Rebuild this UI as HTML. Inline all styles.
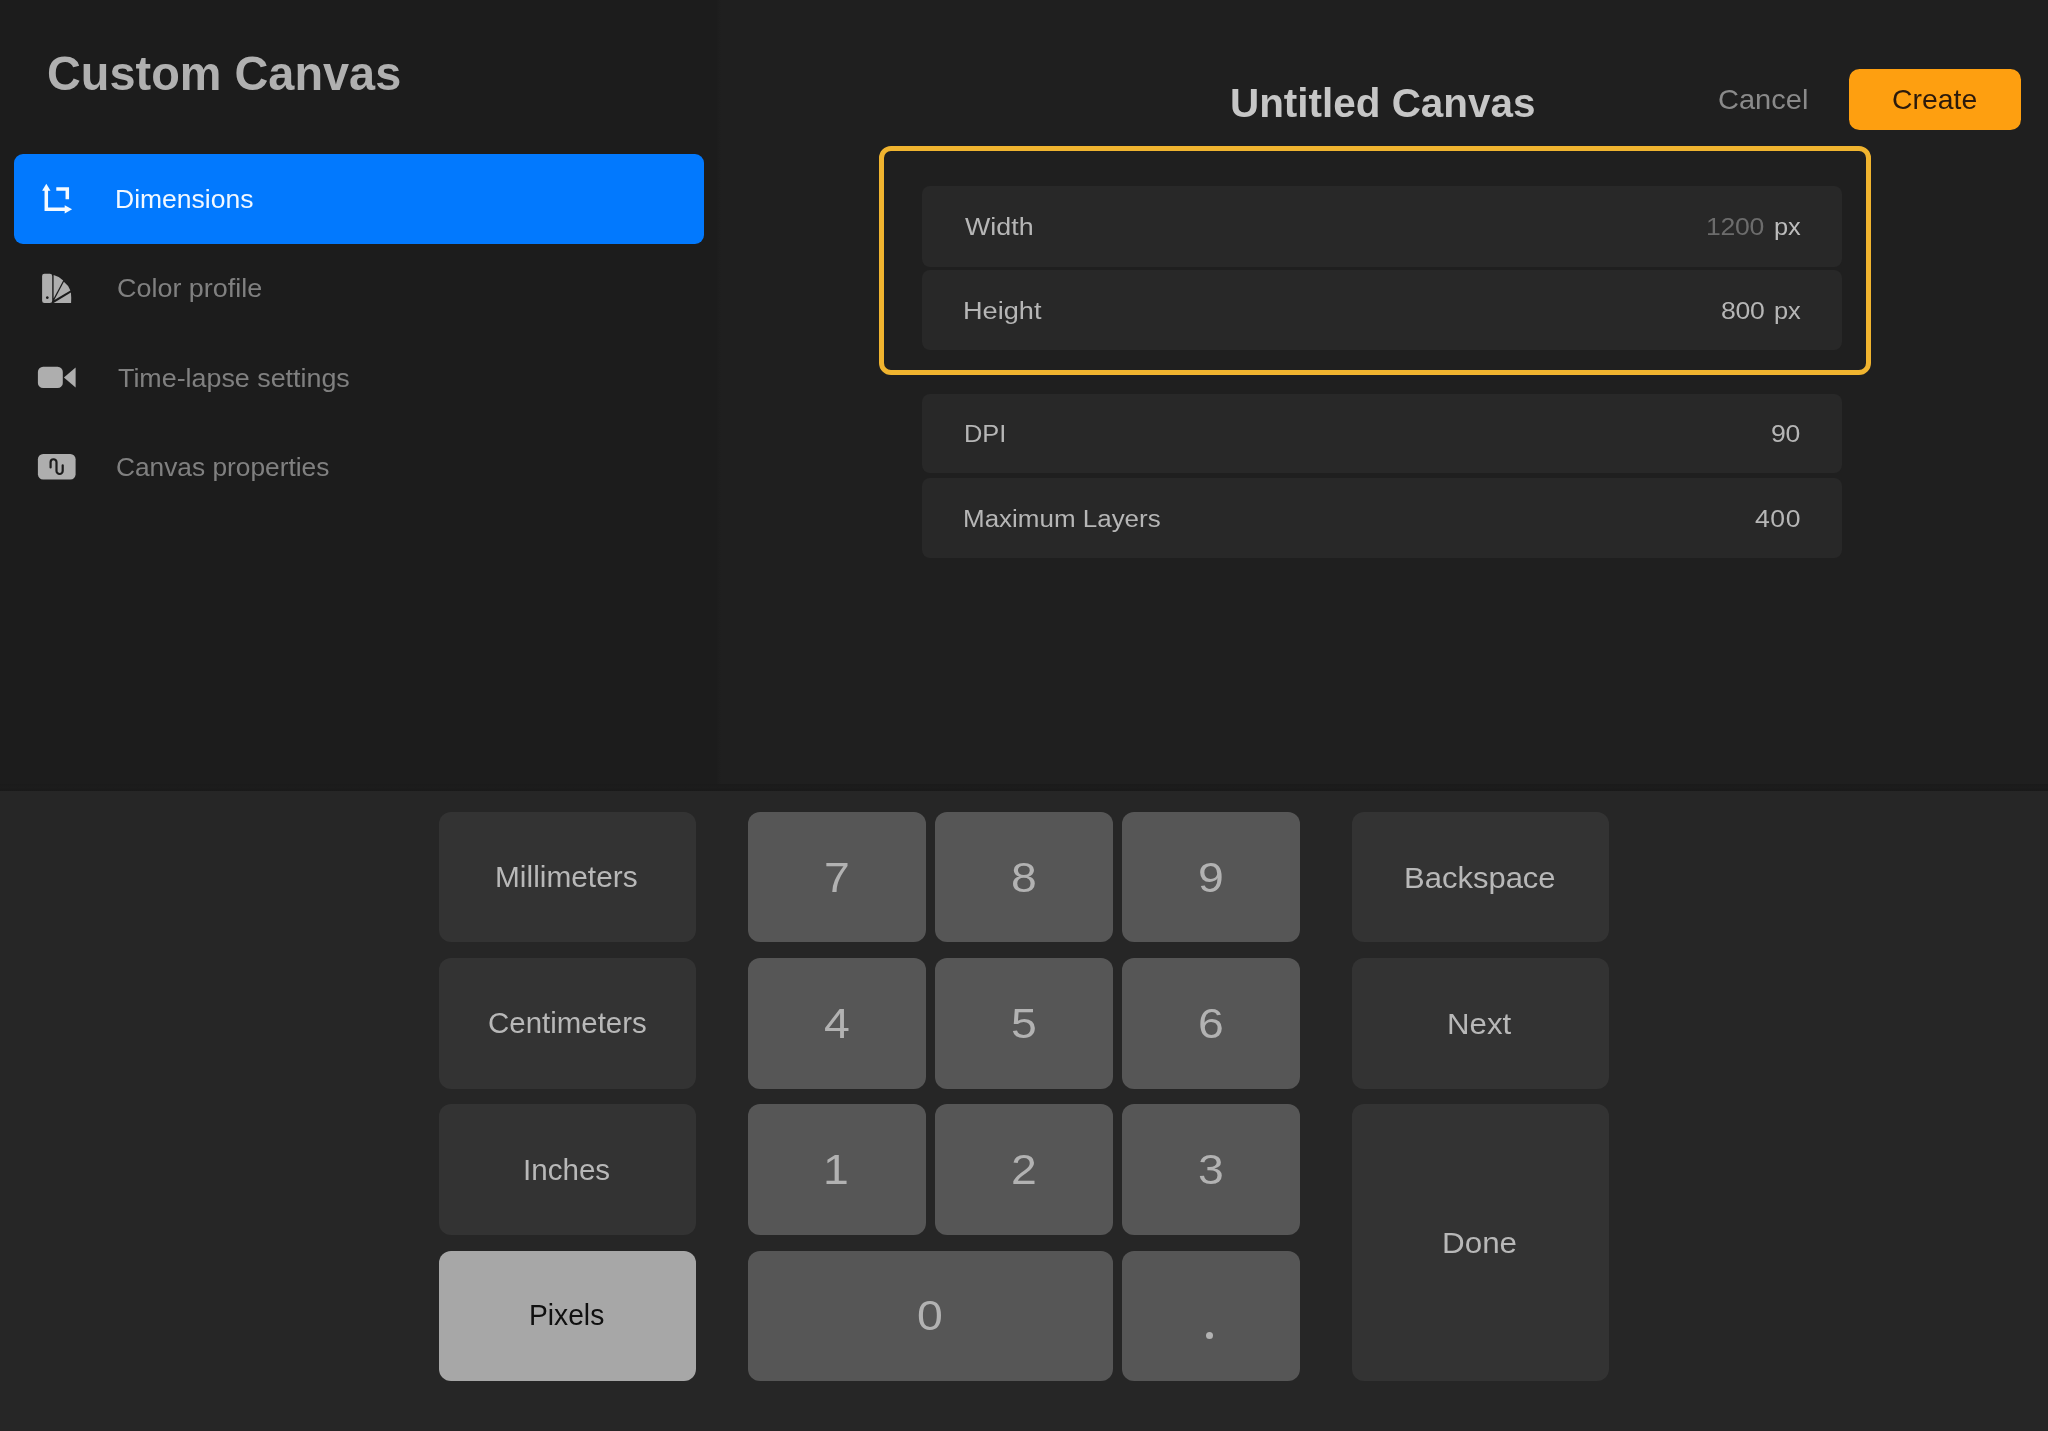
<!DOCTYPE html>
<html lang="en">
<head>
<meta charset="utf-8">
<title>Custom Canvas</title>
<style>
html,body{margin:0;padding:0;overflow:hidden;}
body{width:2048px;height:1431px;overflow:hidden;background:#1f1f1f;position:relative;font-family:"Liberation Sans",sans-serif;}
.abs,.t,.key,.row{position:absolute;}
.t{white-space:pre;line-height:1;transform-origin:0 0;}
#sidebar{left:0;top:0;width:716px;height:791px;background:#1c1c1c;}
#sideedge{left:716px;top:0;width:5px;height:791px;background:linear-gradient(90deg,#1c1c1c,#1f1f1f);}
#kb{left:0;top:790.5px;width:2048px;height:640.5px;background:#262626;}
#kbshadow{left:0;top:783.5px;width:2048px;height:7.5px;background:linear-gradient(180deg,#1a1a1a,#1c1c1c 45%,#191919);}
#sel{left:14px;top:154px;width:689.5px;height:90px;border-radius:9px;background:#0279fe;}
#create{left:1848.7px;top:68.7px;width:172px;height:61.2px;border-radius:10.5px;background:#fe9f10;}
#focus{left:878.8px;top:145.5px;width:982.4px;height:219px;border:5.5px solid #f0b42f;border-radius:12px;}
.row{left:922.3px;width:919.8px;background:#282828;border-radius:8px;}
.key{border-radius:12px;}
.ku{background:#333333;}
.kd{background:#565656;}
.ks{background:#a7a7a7;}
#dot{left:1206.2px;top:1331.6px;width:7.2px;height:7.2px;border-radius:50%;background:#b2b2b2;}
#txt{left:0;top:0;width:2048px;height:1431px;will-change:transform;}
svg{position:absolute;overflow:visible;}
</style>
</head>
<body>
<div id="sidebar" class="abs"></div>
<div id="sideedge" class="abs"></div>
<div id="sel" class="abs"></div>
<svg id="ic-dim" width="2048" height="520" viewBox="0 0 2048 520" style="left:0;top:0">
 <g fill="none" stroke="#f4faff" stroke-width="3.5" stroke-linejoin="miter">
  <path d="M46.3 189.5 V209.3 H66"/>
  <path d="M56.3 188.9 H67.3 V199.2"/>
 </g>
 <g fill="#f4faff">
  <path d="M46.3 183.8 L50.5 190.8 H42.1 Z"/>
  <path d="M72.1 209.3 L64.7 213.4 V205.2 Z"/>
 </g>
</svg>
<svg id="ic-rest" width="2048" height="520" viewBox="0 0 2048 520" style="left:0;top:0">
 <g fill="#aeaeae">
  <!-- colour profile: swatch book -->
  <path d="M44.4 273.8 H49.9 A2.3 2.3 0 0 1 52.2 276.1 V300.8 A2.3 2.3 0 0 1 49.9 303.1 H44.4 A2.3 2.3 0 0 1 42.1 300.8 V276.1 A2.3 2.3 0 0 1 44.4 273.8 Z M47.3 296.2 A1.4 1.4 0 1 0 47.31 296.2 Z" fill-rule="evenodd"/>
  <path d="M53.6 275 Q59.5 276.5 63.2 280.4 L53.6 298.6 Z"/>
  <path d="M63.9 281.8 Q68.4 285.3 70.4 290.4 L54.3 299.9 Z"/>
  <path d="M70.9 292.6 Q71.4 297.5 71.1 302.9 H53.6 Z"/>
  <!-- time-lapse: video camera -->
  <rect x="37.9" y="366.8" width="24.9" height="21.3" rx="5.2"/>
  <path d="M63.9 377.5 L75.6 367.6 V387.6 Z"/>
  <!-- canvas properties -->
  <rect x="37.9" y="454" width="37.7" height="25.5" rx="5.2"/>
 </g>
 <path d="M50.6 467.4 V462.2 A2.95 2.95 0 0 1 56.5 462.2 V470.9 A3.1 3.1 0 0 0 62.7 470.9 V465.3" fill="none" stroke="#1c1c1c" stroke-width="2.2" stroke-linecap="round"/>
</svg>
<div id="create" class="abs"></div>
<div id="focus" class="abs"></div>
<div class="row" style="top:186px;height:80.6px"></div>
<div class="row" style="top:270px;height:80.2px"></div>
<div class="row" style="top:394px;height:79.4px"></div>
<div class="row" style="top:478px;height:79.8px"></div>
<div id="kbshadow" class="abs"></div>
<div id="kb" class="abs"></div>
<div class="key ku" style="left:438.7px;top:811.7px;width:257.5px;height:130.7px"></div>
<div class="key ku" style="left:438.7px;top:958px;width:257.5px;height:130.7px"></div>
<div class="key ku" style="left:438.7px;top:1104.3px;width:257.5px;height:130.7px"></div>
<div class="key ks" style="left:438.7px;top:1250.6px;width:257.5px;height:130.7px"></div>
<div class="key kd" style="left:747.8px;top:811.7px;width:178.2px;height:130.7px"></div>
<div class="key kd" style="left:934.8px;top:811.7px;width:178.2px;height:130.7px"></div>
<div class="key kd" style="left:1121.8px;top:811.7px;width:178.2px;height:130.7px"></div>
<div class="key kd" style="left:747.8px;top:958px;width:178.2px;height:130.7px"></div>
<div class="key kd" style="left:934.8px;top:958px;width:178.2px;height:130.7px"></div>
<div class="key kd" style="left:1121.8px;top:958px;width:178.2px;height:130.7px"></div>
<div class="key kd" style="left:747.8px;top:1104.3px;width:178.2px;height:130.7px"></div>
<div class="key kd" style="left:934.8px;top:1104.3px;width:178.2px;height:130.7px"></div>
<div class="key kd" style="left:1121.8px;top:1104.3px;width:178.2px;height:130.7px"></div>
<div class="key kd" style="left:747.8px;top:1250.6px;width:365.2px;height:130.7px"></div>
<div class="key kd" style="left:1121.8px;top:1250.6px;width:178.2px;height:130.7px"></div>
<div class="key ku" style="left:1351.8px;top:811.7px;width:257px;height:130.7px"></div>
<div class="key ku" style="left:1351.8px;top:958px;width:257px;height:130.7px"></div>
<div class="key ku" style="left:1351.8px;top:1104.3px;width:257px;height:277px"></div>
<div id="dot" class="abs"></div>
<div id="txt" class="abs">
<span class="t" style="left:47.3px;top:50px;font-size:47.6px;color:#b0b0b0;font-weight:700;transform:scaleX(0.9848);">Custom Canvas</span>
<span class="t" style="left:115.2px;top:187px;font-size:25.1px;color:#f2f8ff;transform:scaleX(1.0563);">Dimensions</span>
<span class="t" style="left:116.5px;top:276px;font-size:25.1px;color:#808080;transform:scaleX(1.0737);">Color profile</span>
<span class="t" style="left:118px;top:366px;font-size:25.1px;color:#808080;transform:scaleX(1.0699);">Time-lapse settings</span>
<span class="t" style="left:116.4px;top:455px;font-size:25.1px;color:#808080;transform:scaleX(1.0475);">Canvas properties</span>
<span class="t" style="left:1229.7px;top:84px;font-size:39.8px;color:#c6c6c6;font-weight:700;transform:scaleX(1.0155);">Untitled Canvas</span>
<span class="t" style="left:1717.8px;top:86px;font-size:27.8px;color:#8a8a8a;transform:scaleX(1.044);">Cancel</span>
<span class="t" style="left:1892.2px;top:86px;font-size:27.8px;color:#2b1a0c;transform:scaleX(1.0207);">Create</span>
<span class="t" style="left:965.4px;top:215px;font-size:24.7px;color:#b6b6b6;transform:scaleX(1.0871);">Width</span>
<span class="t" style="left:962.6px;top:299px;font-size:24.7px;color:#b6b6b6;transform:scaleX(1.1);">Height</span>
<span class="t" style="left:963.6px;top:422px;font-size:24.7px;color:#b6b6b6;transform:scaleX(1.0297);">DPI</span>
<span class="t" style="left:963.4px;top:507px;font-size:24.7px;color:#b6b6b6;transform:scaleX(1.0519);">Maximum Layers</span>
<span class="t" style="left:1706.2px;top:215px;font-size:24.2px;color:#6c6c6c;letter-spacing:-0.27px;transform:scaleX(1.1);">1200</span>
<span class="t" style="left:1773.6px;top:215px;font-size:24.7px;color:#bcbcbc;transform:scaleX(1.028);">px</span>
<span class="t" style="left:1721px;top:299px;font-size:24.2px;color:#b6b6b6;letter-spacing:-0.23px;transform:scaleX(1.1);">800</span>
<span class="t" style="left:1773.6px;top:299px;font-size:24.7px;color:#b6b6b6;transform:scaleX(1.028);">px</span>
<span class="t" style="left:1771.1px;top:422px;font-size:24.2px;color:#b6b6b6;letter-spacing:-0.18px;transform:scaleX(1.1);">90</span>
<span class="t" style="left:1755px;top:507px;font-size:24.2px;color:#b6b6b6;letter-spacing:0.5px;transform:scaleX(1.1);">400</span>
<span class="t" style="left:495.4px;top:862px;font-size:29.3px;color:#b8b8b8;transform:scaleX(1.019);">Millimeters</span>
<span class="t" style="left:488px;top:1008px;font-size:29.3px;color:#b8b8b8;transform:scaleX(1.0051);">Centimeters</span>
<span class="t" style="left:523px;top:1155px;font-size:29.3px;color:#b8b8b8;transform:scaleX(1.0096);">Inches</span>
<span class="t" style="left:529px;top:1300px;font-size:29.3px;color:#101010;transform:scaleX(0.9627);">Pixels</span>
<span class="t" style="left:1404.3px;top:863px;font-size:29.3px;color:#b8b8b8;transform:scaleX(1.0579);">Backspace</span>
<span class="t" style="left:1447.3px;top:1009px;font-size:29.3px;color:#b8b8b8;transform:scaleX(1.0655);">Next</span>
<span class="t" style="left:1442.3px;top:1228px;font-size:29.3px;color:#b8b8b8;transform:scaleX(1.0716);">Done</span>
<span class="t" style="left:823.9px;top:856.55px;font-size:42.2px;color:#b2b2b2;transform:scaleX(1.1);">7</span>
<span class="t" style="left:1010.9px;top:856.55px;font-size:42.2px;color:#b2b2b2;transform:scaleX(1.1);">8</span>
<span class="t" style="left:1197.9px;top:856.55px;font-size:42.2px;color:#b2b2b2;transform:scaleX(1.1);">9</span>
<span class="t" style="left:823.9px;top:1002.85px;font-size:42.2px;color:#b2b2b2;transform:scaleX(1.1);">4</span>
<span class="t" style="left:1010.9px;top:1002.85px;font-size:42.2px;color:#b2b2b2;transform:scaleX(1.1);">5</span>
<span class="t" style="left:1197.9px;top:1002.85px;font-size:42.2px;color:#b2b2b2;transform:scaleX(1.1);">6</span>
<span class="t" style="left:823.4px;top:1149.15px;font-size:42.2px;color:#b2b2b2;transform:scaleX(1.1);">1</span>
<span class="t" style="left:1010.9px;top:1149.15px;font-size:42.2px;color:#b2b2b2;transform:scaleX(1.1);">2</span>
<span class="t" style="left:1197.9px;top:1149.15px;font-size:42.2px;color:#b2b2b2;transform:scaleX(1.1);">3</span>
<span class="t" style="left:917.4px;top:1295.45px;font-size:42.2px;color:#b2b2b2;transform:scaleX(1.1);">0</span>
</div>
</body>
</html>
